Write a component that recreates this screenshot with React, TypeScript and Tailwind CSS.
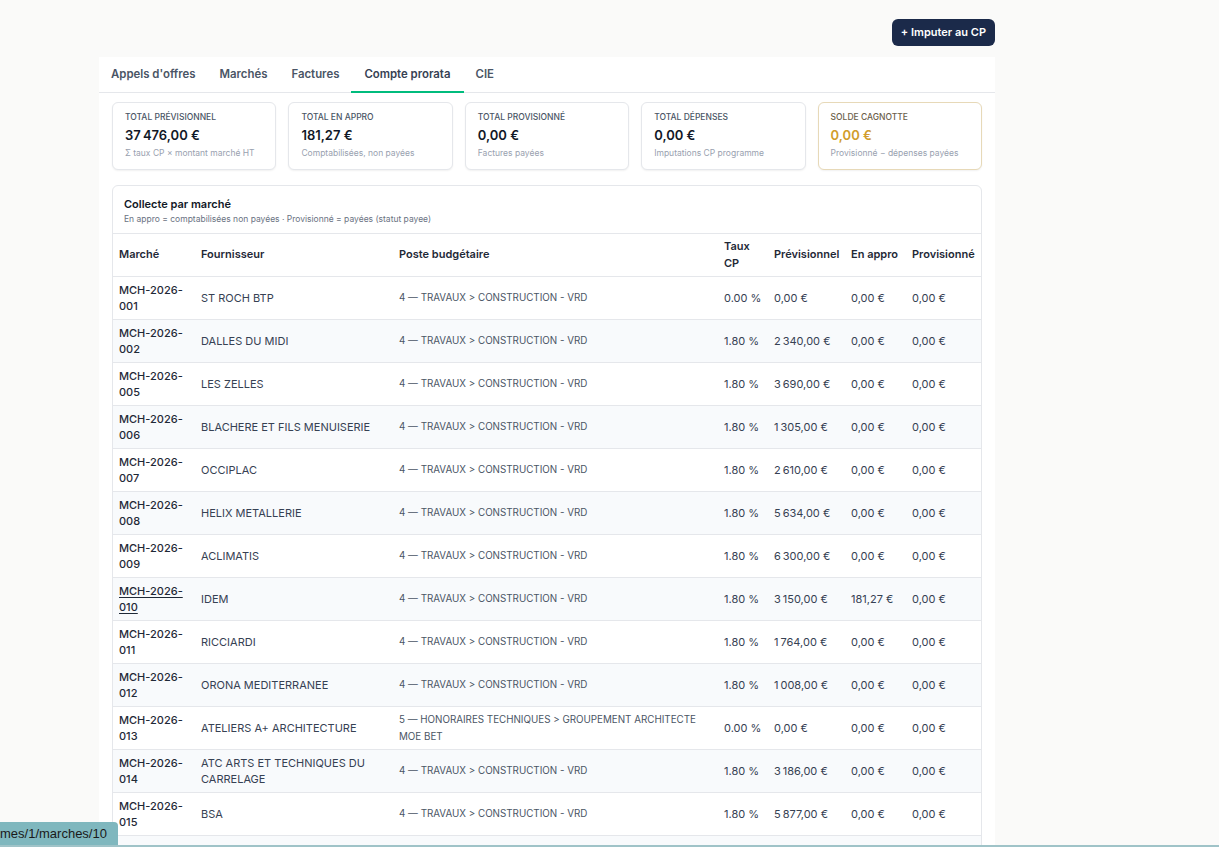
import React from 'react'

const nb = '\u202f'

type Row = {
  code: string
  fournisseur: string
  poste: string
  taux: string
  prev: string
  appro: string
  prov: string
  hover?: boolean
}

const TRAVAUX = '4 — TRAVAUX > CONSTRUCTION - VRD'

const rows: Row[] = [
  { code: '001', fournisseur: 'ST ROCH BTP', poste: TRAVAUX, taux: '0.00 %', prev: '0,00 €', appro: '0,00 €', prov: '0,00 €' },
  { code: '002', fournisseur: 'DALLES DU MIDI', poste: TRAVAUX, taux: '1.80 %', prev: `2${nb}340,00 €`, appro: '0,00 €', prov: '0,00 €' },
  { code: '005', fournisseur: 'LES ZELLES', poste: TRAVAUX, taux: '1.80 %', prev: `3${nb}690,00 €`, appro: '0,00 €', prov: '0,00 €' },
  { code: '006', fournisseur: 'BLACHERE ET FILS MENUISERIE', poste: TRAVAUX, taux: '1.80 %', prev: `1${nb}305,00 €`, appro: '0,00 €', prov: '0,00 €' },
  { code: '007', fournisseur: 'OCCIPLAC', poste: TRAVAUX, taux: '1.80 %', prev: `2${nb}610,00 €`, appro: '0,00 €', prov: '0,00 €' },
  { code: '008', fournisseur: 'HELIX METALLERIE', poste: TRAVAUX, taux: '1.80 %', prev: `5${nb}634,00 €`, appro: '0,00 €', prov: '0,00 €' },
  { code: '009', fournisseur: 'ACLIMATIS', poste: TRAVAUX, taux: '1.80 %', prev: `6${nb}300,00 €`, appro: '0,00 €', prov: '0,00 €' },
  { code: '010', fournisseur: 'IDEM', poste: TRAVAUX, taux: '1.80 %', prev: `3${nb}150,00 €`, appro: '181,27 €', prov: '0,00 €', hover: true },
  { code: '011', fournisseur: 'RICCIARDI', poste: TRAVAUX, taux: '1.80 %', prev: `1${nb}764,00 €`, appro: '0,00 €', prov: '0,00 €' },
  { code: '012', fournisseur: 'ORONA MEDITERRANEE', poste: TRAVAUX, taux: '1.80 %', prev: `1${nb}008,00 €`, appro: '0,00 €', prov: '0,00 €' },
  { code: '013', fournisseur: 'ATELIERS A+ ARCHITECTURE', poste: '5 — HONORAIRES TECHNIQUES > GROUPEMENT ARCHITECTE MOE BET', taux: '0.00 %', prev: '0,00 €', appro: '0,00 €', prov: '0,00 €' },
  { code: '014', fournisseur: 'ATC ARTS ET TECHNIQUES DU CARRELAGE', poste: TRAVAUX, taux: '1.80 %', prev: `3${nb}186,00 €`, appro: '0,00 €', prov: '0,00 €' },
  { code: '015', fournisseur: 'BSA', poste: TRAVAUX, taux: '1.80 %', prev: `5${nb}877,00 €`, appro: '0,00 €', prov: '0,00 €' },
  { code: '016', fournisseur: 'SOCIETE', poste: TRAVAUX, taux: '1.80 %', prev: `2${nb}000,00 €`, appro: '0,00 €', prov: '0,00 €' },
]

const tabs = ["Appels d'offres", 'Marchés', 'Factures', 'Compte prorata', 'CIE']

const stats = [
  { label: 'Total prévisionnel', value: `37${nb}476,00 €`, sub: 'Σ taux CP × montant marché HT' },
  { label: 'Total en appro', value: '181,27 €', sub: 'Comptabilisées, non payées' },
  { label: 'Total provisionné', value: '0,00 €', sub: 'Factures payées' },
  { label: 'Total dépenses', value: '0,00 €', sub: 'Imputations CP programme' },
]

function StatCard({ label, value, sub }: { label: string; value: string; sub: string }) {
  return (
    <div className="rounded-md border border-gray-200 bg-white px-3 pt-[8px] pb-[10px] shadow-[0_1px_2px_rgba(0,0,0,0.06)]">
      <div className="text-[8.5px] font-medium uppercase leading-[12px] text-gray-600">{label}</div>
      <div className="mt-[3px] text-[13px] font-semibold leading-[18px] text-[#111827]">{value}</div>
      <div className="mt-[3px] text-[8.5px] leading-[12px] text-gray-400">{sub}</div>
    </div>
  )
}

export default function App() {
  return (
    <div className="min-h-screen bg-[#fafaf9] font-['Inter',sans-serif]">
      <div className="ml-[99px] w-[896px]">
        <div className="flex justify-end pt-[19px] pb-[11px]">
          <button className="h-[27px] rounded-md bg-[#1b2a4a] px-[9px] text-[11px] font-semibold text-white">
            + Imputer au CP
          </button>
        </div>

        <div className="bg-white pb-10">
          <div className="flex h-[36px] border-b border-gray-200">
            {tabs.map((t) => {
              const active = t === 'Compte prorata'
              return (
                <div
                  key={t}
                  className={
                    active
                      ? '-mb-px flex items-center border-b-2 border-emerald-500 px-[13px] pt-[1px] text-[11.4px] font-semibold text-gray-700'
                      : 'flex items-center px-3 text-[11.4px] font-semibold text-gray-600'
                  }
                >
                  {t}
                </div>
              )
            })}
          </div>

          <div className="px-[13px]">
            <div className="mt-[9px] grid grid-cols-5 gap-3">
              {stats.map((s) => (
                <StatCard key={s.label} {...s} />
              ))}
              <div className="rounded-md border border-[#e7d9b8] bg-white px-3 pt-[8px] pb-[10px] shadow-[0_1px_2px_rgba(0,0,0,0.06)]">
                <div className="text-[8.5px] font-medium uppercase leading-[12px] text-[#6b5e4a]">Solde cagnotte</div>
                <div className="mt-[3px] text-[13px] font-semibold leading-[18px] text-[#d19d2b]">0,00 €</div>
                <div className="mt-[3px] text-[8.5px] leading-[12px] text-gray-400">Provisionné − dépenses payées</div>
              </div>
            </div>

            <div className="mt-[15px] rounded-md border border-gray-200 bg-white">
              <div className="border-b border-gray-200 px-[11px] pt-[10px] pb-[8px]">
                <div className="text-[11px] font-semibold leading-[16px] text-[#111827]">Collecte par marché</div>
                <div className="mt-[1px] text-[8.5px] leading-[12px] text-gray-500">
                  En appro = comptabilisées non payées · Provisionné = payées (statut payee)
                </div>
              </div>
              <table className="w-full table-fixed border-collapse text-left">
                <colgroup>
                  <col className="w-[82px]" />
                  <col className="w-[198px]" />
                  <col className="w-[325px]" />
                  <col className="w-[50px]" />
                  <col className="w-[77px]" />
                  <col className="w-[61px]" />
                  <col />
                </colgroup>
                <thead>
                  <tr className="h-[42px] border-b border-gray-200 text-[11px] font-semibold leading-[17px] text-[#1f2937]">
                    <th className="px-1.5 py-0 font-semibold">Marché</th>
                    <th className="px-1.5 py-0 font-semibold">Fournisseur</th>
                    <th className="px-1.5 py-0 font-semibold">Poste budgétaire</th>
                    <th className="px-1.5 py-0 font-semibold">Taux CP</th>
                    <th className="px-1.5 py-0 font-semibold">Prévisionnel</th>
                    <th className="px-1.5 py-0 font-semibold">En appro</th>
                    <th className="px-1.5 py-0 font-semibold">Provisionné</th>
                  </tr>
                </thead>
                <tbody>
                  {rows.map((r, i) => (
                    <tr
                      key={r.code}
                      className={
                        'h-[43px] border-b border-gray-200 text-[11px] leading-[16px] text-gray-700 ' +
                        (i % 2 === 1 ? 'bg-[#f8fafc]' : 'bg-white')
                      }
                    >
                      <td className="px-1.5 py-[5px]">
                        <span className={'font-medium text-[#1f2937] ' + (r.hover ? 'underline underline-offset-2' : '')}>
                          MCH-2026-{r.code}
                        </span>
                      </td>
                      <td className="px-1.5 py-[5px]">{r.fournisseur}</td>
                      <td className="px-1.5 py-[4px] text-[9.8px] leading-[17px] text-gray-600">{r.poste}</td>
                      <td className="px-1.5 py-[5px]">{r.taux}</td>
                      <td className="whitespace-nowrap px-1.5 py-[5px]">{r.prev}</td>
                      <td className="whitespace-nowrap px-1.5 py-[5px]">{r.appro}</td>
                      <td className="whitespace-nowrap px-1.5 py-[5px]">{r.prov}</td>
                    </tr>
                  ))}
                </tbody>
              </table>
            </div>
          </div>
        </div>
      </div>

      <div className="fixed bottom-[2px] left-0 rounded-tr-sm bg-[#7fb7be] pr-[11px] pt-[2px] pb-[2px] font-['Liberation_Sans',sans-serif] text-[13px] leading-[19px] text-[#1a1a1a]">
        mes/1/marches/10
      </div>
      <div className="fixed bottom-0 left-0 h-[2px] w-full bg-[#9fc3c8]" />
    </div>
  )
}
